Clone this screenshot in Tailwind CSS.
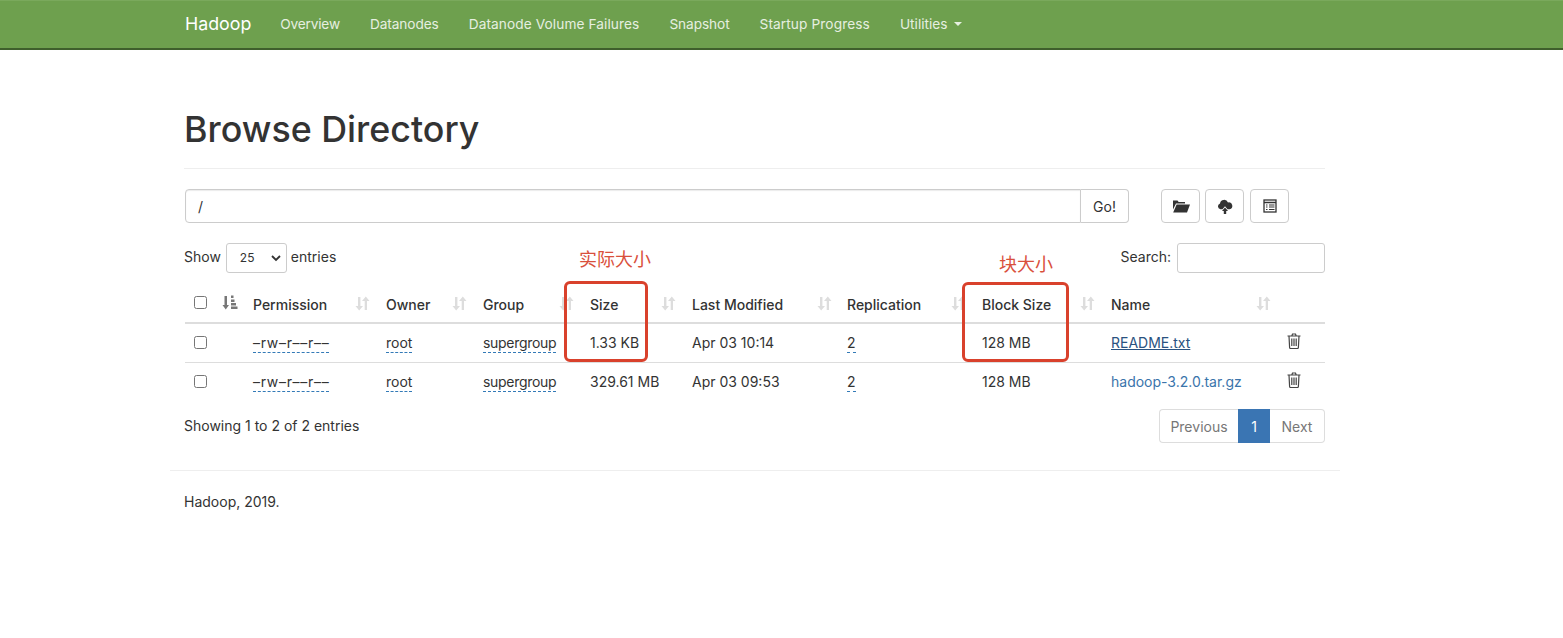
<!doctype html>
<html lang="en">
<head>
<meta charset="UTF-8" />
<title>Browsing HDFS</title>
<script src="https://cdn.jsdelivr.net/npm/@tailwindcss/browser@4"></script>
</head>
<body class="bg-white text-[#333] text-[14px] font-['Inter','Noto_Sans_CJK_SC',sans-serif]">
  <!-- navbar -->
  <nav class="h-[50px] bg-[#6ea04e] border-t border-t-[#7aa95c] border-b-2 border-b-[#3f5f2c]">
    <div class="w-[1170px] ml-[170px] px-[15px] flex items-center h-[46px]">
      <a class="text-[17.800px] text-white mr-[29px]">Hadoop</a>
      <div class="flex gap-[30px] text-[13.700px] text-[#e6efe0]">
        <a class="tracking-[-0.2px]">Overview</a>
        <a class="tracking-[-0.1px]">Datanodes</a>
        <a class="tracking-[0.08px]">Datanode Volume Failures</a>
        <a class="tracking-[-0.1px]">Snapshot</a>
        <a class="tracking-[0.1px]">Startup Progress</a>
        <a class="flex items-center gap-[6px]">Utilities <span class="w-0 h-0 border-x-4 border-x-transparent border-t-4 border-t-[#e6efe0]"></span></a>
      </div>
    </div>
  </nav>

  <main class="w-[1170px] ml-[170px] px-[15px] relative">
    <h1 class="text-[35.800px] font-medium text-[#333] pt-[56px] h-[119px] border-b border-[#eee] leading-[46px] -ml-px">Browse Directory</h1>

    <!-- path bar -->
    <div class="flex mt-[20px] h-[34px]">
      <div class="w-[896px] border border-[#ccc] rounded-l-[4px] px-[12px] flex items-center shadow-[inset_0_1px_1px_rgba(0,0,0,0.08)]">/</div>
      <button class="w-[48px] border border-l-0 border-[#ccc] rounded-r-[4px]">Go!</button>
      <div class="flex ml-[32px] gap-[5px]">
        <button class="w-[39px] border border-[#ccc] rounded-[4px] flex items-center justify-center">
          <svg width="18" height="14" viewBox="0 0 18 14" fill="#333"><path d="M1 1.500h4.500l1.200 1.500H13v1.600H4L1 10.500z"/><path d="M4.600 5.600H18l-3 8H1.200z"/></svg>
        </button>
        <button class="w-[39px] border border-[#ccc] rounded-[4px] flex items-center justify-center">
          <svg width="16" height="15" viewBox="0 0 16 15" fill="#333"><path d="M3.400 10.200A3 3 0 0 1 3 4.400 4.200 4.200 0 0 1 11 3.400a3.400 3.400 0 0 1 1.600 6.800h-2.100L8 7.200l-2.500 3z"/><path d="M8 8.600l3 3.400H9.200v3H6.800v-3H5z"/></svg>
        </button>
        <button class="w-[39px] ml-px border border-[#ccc] rounded-[4px] flex items-center justify-center">
          <svg width="14" height="14" viewBox="0 0 14 14" fill="none" stroke="#333"><rect x="1" y="1" width="12" height="12" stroke-width="1.300"/><path d="M1 3.500h12" stroke-width="1.500"/><path d="M3 6h1.500M6 6h5.500M3 8h1.500M6 8h5.500M3 10.500h1.500M6 10.500h5.500" stroke-width="1"/></svg>
        </button>
      </div>
    </div>

    <!-- table controls -->
    <div class="flex justify-between mt-[20px] h-[30px]">
      <div class="flex items-center -ml-px h-[30px]">
        <span class="mb-[3px]">Show</span>
        <span class="ml-[5px] w-[61px] h-[30px] border border-[#ccc] rounded-[3px] flex items-center justify-between pl-[13px] pr-[5px] text-[12px]">25
          <svg width="10" height="7" viewBox="0 0 10 7" fill="none" stroke="#333" stroke-width="1.800"><path d="M1 1l4 4 4-4"/></svg>
        </span>
        <span class="ml-[4px] mb-[3px]">entries</span>
      </div>
      <div class="flex items-center gap-[6px]">
        <span class="mb-[3px]">Search:</span>
        <span class="w-[148px] h-[30px] border border-[#ccc] rounded-[3px]"></span>
      </div>
    </div>

    <!-- listing -->
    <table class="w-[1140px] mt-[12px] table-fixed border-collapse">
      <colgroup>
        <col class="w-[30px]"><col class="w-[30px]"><col class="w-[133px]"><col class="w-[97px]"><col class="w-[107px]"><col class="w-[102px]"><col class="w-[155px]"><col class="w-[135px]"><col class="w-[129px]"><col class="w-[176px]"><col class="w-[46px]">
      </colgroup>
      <thead>
        <tr class="h-[38px] border-b-2 border-[#ddd] text-left">
          <th class="font-normal"><input type="checkbox" class="ml-[9px] mb-[2px] block w-[13px] h-[13px]"></th>
          <th class="font-normal pl-[7px]">
            <svg class="mb-[2px]" width="16" height="15" viewBox="0 0 16 15" fill="#777"><path d="M2.500 1H5v9h2l-3.250 4.500L.5 10h2zM9 .5h2.500v2.500H9zM9 4.500h3.500v2.500H9zM9 8h5v2.500H9zM9 11.500h6.500V14H9z"/></svg>
          </th>
          <th class="font-medium px-[8px]"><div class="flex justify-between items-center pt-[2px]">Permission<svg class="mb-[2px]" width="15" height="15" viewBox="0 0 15 15" fill="#ddd"><path d="M3 1h2.400v9H8l-3.800 4.500L.5 10H3zM9.700 5H7l3.800-4.500L14.500 5H12v9H9.700z"/></svg></div></th>
          <th class="font-medium px-[8px]"><div class="flex justify-between items-center pt-[2px]">Owner<svg class="mb-[2px]" width="15" height="15" viewBox="0 0 15 15" fill="#ddd"><path d="M3 1h2.400v9H8l-3.800 4.500L.5 10H3zM9.700 5H7l3.800-4.500L14.500 5H12v9H9.700z"/></svg></div></th>
          <th class="font-medium px-[8px]"><div class="flex justify-between items-center pt-[2px]">Group<svg class="mb-[2px]" width="15" height="15" viewBox="0 0 15 15" fill="#ddd"><path d="M3 1h2.400v9H8l-3.800 4.500L.5 10H3zM9.700 5H7l3.800-4.500L14.500 5H12v9H9.700z"/></svg></div></th>
          <th class="font-medium px-[8px]"><div class="flex justify-between items-center pt-[2px]">Size<svg class="mb-[2px]" width="15" height="15" viewBox="0 0 15 15" fill="#ddd"><path d="M3 1h2.400v9H8l-3.800 4.500L.5 10H3zM9.700 5H7l3.800-4.500L14.500 5H12v9H9.700z"/></svg></div></th>
          <th class="font-medium px-[8px]"><div class="flex justify-between items-center pt-[2px]">Last Modified<svg class="mb-[2px] mr-[-1px]" width="15" height="15" viewBox="0 0 15 15" fill="#ddd"><path d="M3 1h2.400v9H8l-3.800 4.500L.5 10H3zM9.700 5H7l3.800-4.500L14.500 5H12v9H9.700z"/></svg></div></th>
          <th class="font-medium px-[8px]"><div class="flex justify-between items-center pt-[2px]">Replication<svg class="mb-[2px]" width="15" height="15" viewBox="0 0 15 15" fill="#ddd"><path d="M3 1h2.400v9H8l-3.800 4.500L.5 10H3zM9.700 5H7l3.800-4.500L14.500 5H12v9H9.700z"/></svg></div></th>
          <th class="font-medium px-[8px]"><div class="flex justify-between items-center pt-[2px]">Block Size<svg class="mb-[2px]" width="15" height="15" viewBox="0 0 15 15" fill="#ddd"><path d="M3 1h2.400v9H8l-3.800 4.500L.5 10H3zM9.700 5H7l3.800-4.500L14.500 5H12v9H9.700z"/></svg></div></th>
          <th class="font-medium px-[8px]"><div class="flex justify-between items-center pt-[2px]">Name<svg class="mb-[2px]" width="15" height="15" viewBox="0 0 15 15" fill="#ddd"><path d="M3 1h2.400v9H8l-3.800 4.500L.5 10H3zM9.700 5H7l3.800-4.500L14.500 5H12v9H9.700z"/></svg></div></th>
          <th></th>
        </tr>
      </thead>
      <tbody>
        <tr class="h-[39px] border-b border-[#ddd]">
          <td><input type="checkbox" class="ml-[9px] block w-[13px] h-[13px]"></td><td></td>
          <td class="px-[8px]"><span class="pb-px border-b border-dashed border-[#337ab7] tracking-[0.7px]">–rw–r––r––</span></td>
          <td class="px-[8px]"><span class="pb-px border-b border-dashed border-[#337ab7]">root</span></td>
          <td class="px-[8px]"><span class="pb-px border-b border-dashed border-[#337ab7] tracking-[-0.3px]">supergroup</span></td>
          <td class="px-[8px]">1.33 KB</td>
          <td class="px-[8px]">Apr 03 10:14</td>
          <td class="px-[8px]"><span class="pb-px border-b border-dashed border-[#337ab7]">2</span></td>
          <td class="px-[8px]">128 MB</td>
          <td class="px-[8px] text-[#2a5280] underline">README.txt</td>
          <td class="pl-[8px] pb-[4px]"><svg width="14" height="16" viewBox="0 0 14 16" fill="none" stroke="#444" stroke-width="1.200"><path d="M.5 3h13M4.800 3l.7-2h3l.7 2M2 3l.6 11.500q.1 1 1 1h6.800q.9 0 1-1L12 3M4.800 5.500v7.500M7 5.500v7.500M9.200 5.500v7.500"/></svg></td>
        </tr>
        <tr class="h-[39px]">
          <td><input type="checkbox" class="ml-[9px] block w-[13px] h-[13px]"></td><td></td>
          <td class="px-[8px]"><span class="pb-px border-b border-dashed border-[#337ab7] tracking-[0.7px]">–rw–r––r––</span></td>
          <td class="px-[8px]"><span class="pb-px border-b border-dashed border-[#337ab7]">root</span></td>
          <td class="px-[8px]"><span class="pb-px border-b border-dashed border-[#337ab7] tracking-[-0.3px]">supergroup</span></td>
          <td class="px-[8px]">329.61 MB</td>
          <td class="px-[8px]">Apr 03 09:53</td>
          <td class="px-[8px]"><span class="pb-px border-b border-dashed border-[#337ab7]">2</span></td>
          <td class="px-[8px]">128 MB</td>
          <td class="px-[8px] text-[#3a74ab]">hadoop-3.2.0.tar.gz</td>
          <td class="pl-[8px] pb-[4px]"><svg width="14" height="16" viewBox="0 0 14 16" fill="none" stroke="#444" stroke-width="1.200"><path d="M.5 3h13M4.800 3l.7-2h3l.7 2M2 3l.6 11.500q.1 1 1 1h6.800q.9 0 1-1L12 3M4.800 5.500v7.500M7 5.500v7.500M9.200 5.500v7.500"/></svg></td>
        </tr>
      </tbody>
    </table>

    <div class="flex justify-between items-start mt-[8px]">
      <div class="-ml-px mt-[6px]">Showing 1 to 2 of 2 entries</div>
      <div class="flex h-[34px]">
        <span class="w-[79px] flex items-center justify-center border border-r-0 border-[#ddd] rounded-l-[4px] text-[#777]">Previous</span>
        <span class="w-[32px] flex items-center justify-center bg-[#3a75b3] text-white">1</span>
        <span class="w-[55px] flex items-center justify-center border border-l-0 border-[#ddd] rounded-r-[4px] text-[#777]">Next</span>
      </div>
    </div>

    <!-- annotations drawn over the screenshot -->
    <div class="absolute left-[394px] top-[231px] w-[84px] h-[81px] border-[3px] border-[#d9412c] rounded-[6px]"></div>
    <div class="absolute left-[792px] top-[232px] w-[107px] h-[80px] border-[3px] border-[#d9412c] rounded-[6px]"></div>
    <div class="absolute left-[409px] top-[199px] text-[18px] leading-[22px] text-[#d9503c]">实际大小</div>
    <div class="absolute left-[829px] top-[204px] text-[18px] leading-[22px] text-[#d9503c]">块大小</div>
  </main>

  <footer class="w-[1170px] ml-[170px] mt-[27px] border-t border-[#eee] px-[15px] pt-[20px]">
    <p class="-ml-px">Hadoop, 2019.</p>
  </footer>
</body>
</html>
